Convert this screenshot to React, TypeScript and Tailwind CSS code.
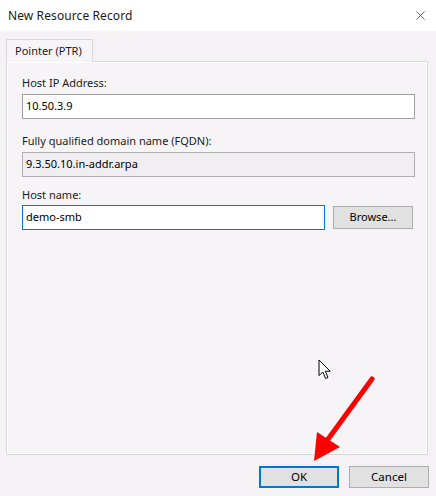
import { X } from 'lucide-react';

const font = { fontFamily: '"Noto Sans", "Liberation Sans", sans-serif' };

const Field = ({ label, value, className, labelClass }: { label: string; value: string; className: string; labelClass: string }) => (
    <div className="flex flex-col">
        <label className={`text-[11px] leading-4 text-[#1a1a1a] ${labelClass}`}>{label}</label>
        <div className={`h-[25px] flex items-center px-[3px] text-[11px] text-black ${className}`}>{value}</div>
    </div>
);

export default function App() {
    return (
        <div className="relative w-[436px] h-[496px] flex flex-col bg-[#f5f2f5] overflow-hidden" style={font}>
            {/* Title bar */}
            <div className="h-[31px] bg-white flex items-center justify-between pl-2 pr-[8px]">
                <span className="text-[12px] text-[#1a1a1a] tracking-[0.1px]">New Resource Record</span>
                <X size={15} strokeWidth={1.1} className="text-[#222]" />
            </div>

            {/* Body */}
            <div className="flex-1 flex flex-col pt-2 pl-[6px] pr-2">
                {/* Tab strip */}
                <div className="flex">
                    <div className="relative z-10 h-[23px] w-[87px] border border-b-0 border-[#d9d9d9] bg-[#f7f4f7] text-[11px] text-[#1a1a1a] pl-2 pt-[3px] -mb-px">
                        Pointer (PTR)
                    </div>
                </div>

                {/* Tab panel */}
                <div className="h-[394px] border border-[#d9d9d9] bg-[#f7f4f7] shadow-[inset_1px_1px_0_#ffffff,inset_-1px_-1px_0_#ffffff] pl-[15px] pr-3 pt-[13px]">
                    <Field
                        label="Host IP Address:"
                        value="10.50.3.9"
                        labelClass="mb-[3px]"
                        className="border border-[#a0a0a0] bg-white"
                    />
                    <div className="h-[14px]" />
                    <Field
                        label="Fully qualified domain name (FQDN):"
                        value="9.3.50.10.in-addr.arpa"
                        labelClass="mb-[3px]"
                        className="border border-[#b0b0b0] bg-[#f0eef0]"
                    />
                    <div className="mt-[10px] text-[11px] leading-4 text-[#1a1a1a]">Host name:</div>
                    <div className="flex items-center gap-2 mt-[2px]">
                        <div className="w-[303px] h-[25px] flex items-center px-[3px] border border-[#0078d7] bg-white text-[11px] text-black">
                            demo-smb
                        </div>
                        <button className="w-[80px] h-[23px] border border-[#adadad] bg-[#e1e1e1] text-[11px] text-black">
                            Browse...
                        </button>
                    </div>
                </div>

                {/* Buttons */}
                <div className="flex justify-end gap-[10px] mt-[11px] -mr-[1px]">
                    <button className="w-[80px] h-[22px] border-2 border-[#0078d7] bg-[#e1e1e1] text-[11.5px] text-black">OK</button>
                    <button className="w-[80px] h-[22px] border border-[#adadad] bg-[#e1e1e1] text-[11.5px] text-black">Cancel</button>
                </div>
            </div>

            {/* Mouse pointer */}
            <svg className="absolute left-[318px] top-[359px] pointer-events-none" width="15" height="21" viewBox="0 0 15 21">
                <path d="M1 1 L1 16.5 L4.8 13 L7.6 19.5 L10 18.5 L7.3 12.2 L12.2 12.2 Z" fill="#fff" stroke="#000" strokeWidth="1" strokeLinejoin="miter" />
            </svg>

            {/* Red annotation arrow */}
            <svg className="absolute inset-0 pointer-events-none" width="436" height="496" viewBox="0 0 436 496">
                <line x1="372" y1="379" x2="326" y2="442" stroke="#ff0000" strokeWidth="5" strokeLinecap="round" />
                <polygon points="314,461 317,432 340,447" fill="#ff0000" />
            </svg>
        </div>
    );
}
